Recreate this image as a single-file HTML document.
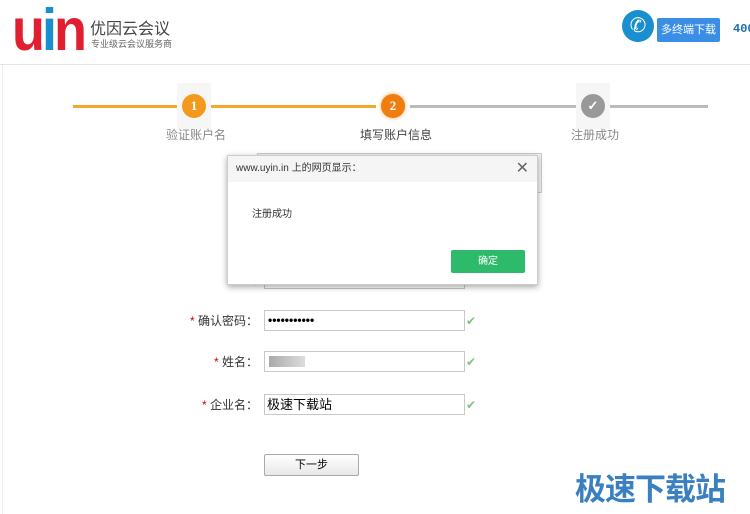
<!DOCTYPE html>
<html><head><meta charset="utf-8"><style>
body{margin:0;width:750px;height:514px;overflow:hidden;background:#fff;font-family:"Liberation Sans","Noto Sans CJK SC",sans-serif;position:relative}
.a{position:absolute}
.inp{position:absolute;left:264px;width:199px;height:19px;border:1px solid #c8c8c8;background:#fff;font-size:12px;line-height:19px}
.lab{position:absolute;font-size:12px;color:#333;text-align:right;width:90px;left:168px}
.lab b{color:#c00;font-weight:normal}
.ck{position:absolute;left:466px;color:#7cc47c;font-size:12px;margin-top:3px}
.step{position:absolute;width:34px;height:46px;background:#f6f6f6;top:83px}
.c{position:absolute;width:24px;height:24px;border-radius:50%;top:94px;color:#fff;font-weight:bold;font-size:13px;text-align:center;line-height:24px;font-family:"Liberation Serif",serif}
.sl{position:absolute;top:126px;font-size:12px;color:#888}
</style></head><body>
<div class="a" style="left:12px;top:4px;font-size:54px;font-weight:900;line-height:48px;letter-spacing:-3px;transform:scaleY(1.1);transform-origin:top;font-family:'Liberation Sans',sans-serif"><span style="color:#e02030">u</span><span style="color:#1a8fd0">i</span><span style="color:#e02030">n</span></div>
<div class="a" style="left:90px;top:15px;font-size:16px;color:#444">优因云会议</div>
<div class="a" style="left:91px;top:37px;font-size:9px;color:#666">专业级云会议服务商</div>
<div class="a" style="left:622px;top:10px;width:32px;height:32px;border-radius:50%;background:#1a8fd0;color:#fff;font-size:20px;text-align:center;line-height:32px">✆</div>
<div class="a" style="left:657px;top:18px;width:63px;height:24px;background:#3a8ee6;color:#fff;font-size:11px;line-height:24px;text-align:center;border-radius:2px">多终端下载</div>
<div class="a" style="left:733px;top:22px;font-size:12px;color:#1a6fb0;font-weight:bold;font-family:'Liberation Mono',monospace">400</div>
<div class="a" style="left:0;top:64px;width:750px;height:1px;background:#e5e5e5"></div>
<div class="a" style="left:2px;top:65px;width:1px;height:449px;background:#eee"></div>
<div class="a" style="left:73px;top:105px;width:320px;height:3px;background:#f0a830"></div>
<div class="a" style="left:393px;top:105px;width:315px;height:3px;background:#bbb"></div>
<div class="step" style="left:177px"></div><div class="step" style="left:376px;background:#fff"></div><div class="step" style="left:576px"></div>
<div class="c" style="left:182px;background:#f39a1e">1</div>
<div class="c" style="left:381px;background:#ef7d0f;box-shadow:0 0 4px #f6b060">2</div>
<div class="c" style="left:581px;background:#999">✓</div>
<div class="sl" style="left:166px">验证账户名</div>
<div class="sl" style="left:360px;color:#444">填写账户信息</div>
<div class="sl" style="left:571px">注册成功</div>
<div class="a" style="left:257px;top:153px;width:283px;height:38px;border:1px solid #ccc;background:#f3f3f3"></div>
<div class="lab" style="top:229px;font-size:13px"><b>*</b> 帐</div>
<div class="lab" style="top:269px;font-size:13px"><b>*</b> 密</div>
<div class="inp" style="top:268px"></div>
<div class="lab" style="top:312px"><b>*</b> 确认密码：</div>
<div class="inp" style="top:310px;font-weight:bold;padding-left:3px;width:196px">•••••••••••</div><div class="ck" style="top:311px">✔</div>
<div class="lab" style="top:353px"><b>*</b> 姓名：</div>
<div class="inp" style="top:351px"><span style="display:inline-block;margin:4px 0 0 4px;width:36px;height:11px;background:linear-gradient(90deg,#aaa,#ddd)"></span></div><div class="ck" style="top:352px">✔</div>
<div class="lab" style="top:396px"><b>*</b> 企业名：</div>
<div class="inp" style="top:394px;font-size:13px;padding-left:2px;width:197px">极速下载站</div><div class="ck" style="top:395px">✔</div>
<div class="a" style="left:264px;top:454px;width:93px;height:20px;border:1px solid #aaa;border-radius:2px;background:linear-gradient(#fff,#e8e8e8);font-size:11px;text-align:center;line-height:20px">下一步</div>
<div class="a" style="left:575px;top:464px;font-size:31px;font-weight:bold;color:#3a7fc0;letter-spacing:-1px">极速下载站</div>
<div class="a" style="left:227px;top:155px;width:309px;height:128px;background:#fff;border:1px solid #ccc;box-shadow:0 2px 6px rgba(0,0,0,.35)">
<div style="height:26px;background:#f5f5f5;font-size:10px;color:#333;line-height:26px;padding-left:8px">www.uyin.in 上的网页显示：<span style="position:absolute;right:8px;top:0;font-size:16px;color:#666">✕</span></div>
<div class="a" style="left:24px;top:49px;font-size:10px;color:#333">注册成功</div>
<div class="a" style="left:223px;top:94px;width:74px;height:23px;background:#2dba6a;color:#fff;font-size:10px;text-align:center;line-height:23px;border-radius:2px">确定</div>
</div>
</body></html>
